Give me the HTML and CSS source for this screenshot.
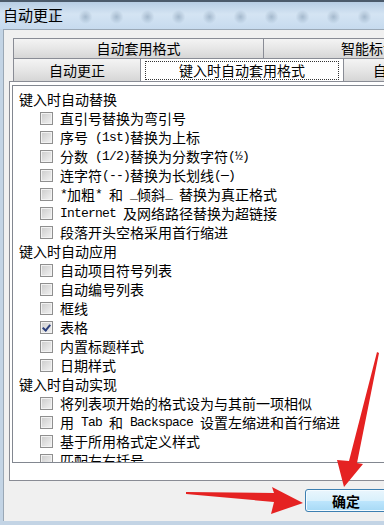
FILE: index.html
```html
<!DOCTYPE html>
<html lang="zh-CN">
<head>
<meta charset="UTF-8">
<meta name="viewport" content="width=device-width, initial-scale=1.0">
<title>自动更正</title>
<link rel="stylesheet" href="styles.css">
</head>
<body>
<div class="window">
    <div class="titlebar">自动更正</div>

    <div class="client">
        <div class="tabs">
            <div class="tab-row top">
                <div class="tab wide">自动套用格式</div>
                <div class="tab smart">智能标记</div>
            </div>
            <div class="tab-row bottom">
                <div class="tab first">自动更正</div>
                <div class="tab active"><span class="focus">键入时自动套用格式</span></div>
                <div class="tab last">自动套用格式</div>
            </div>
        </div>

        <div class="panel">
            <div class="list">
                <div class="group">键入时自动替换</div>
                <div class="item"><span class="check"></span>直引号替换为弯引号</div>
                <div class="item"><span class="check"></span>序号<span class="en"> (1st)</span>替换为上标</div>
                <div class="item"><span class="check"></span>分数<span class="en"> (1/2)</span>替换为分数字符<span class="en">(½)</span></div>
                <div class="item"><span class="check"></span>连字符<span class="en">(--)</span>替换为长划线<span class="en">(—)</span></div>
                <div class="item"><span class="check"></span><span class="en">*</span>加粗<span class="en">* </span>和<span class="en"> _</span>倾斜<span class="en">_ </span>替换为真正格式</div>
                <div class="item"><span class="check"></span><span class="en">Internet </span>及网络路径替换为超链接</div>
                <div class="item"><span class="check"></span>段落开头空格采用首行缩进</div>

                <div class="group">键入时自动应用</div>
                <div class="item"><span class="check"></span>自动项目符号列表</div>
                <div class="item"><span class="check"></span>自动编号列表</div>
                <div class="item"><span class="check"></span>框线</div>
                <div class="item"><span class="check checked"></span>表格</div>
                <div class="item"><span class="check"></span>内置标题样式</div>
                <div class="item"><span class="check"></span>日期样式</div>

                <div class="group">键入时自动实现</div>
                <div class="item"><span class="check"></span>将列表项开始的格式设为与其前一项相似</div>
                <div class="item"><span class="check"></span>用<span class="en"> Tab </span>和<span class="en"> Backspace </span>设置左缩进和首行缩进</div>
                <div class="item"><span class="check"></span>基于所用格式定义样式</div>
                <div class="item"><span class="check"></span>匹配左右括号</div>
            </div>
        </div>

        <div class="footer">
            <button class="button ok">确定</button>
        </div>
    </div>

    <!-- красные стрелки поверх окна -->
    <svg class="arrows" width="384" height="525" viewBox="0 0 384 525">
        <polygon points="186,492 274,493 272,487 303,503 271,514 274,502 186,494" fill="#e52222"/>
        <polygon points="377,352 379,353 357,463 363,464 344,487 337,460 349,461" fill="#e52222"/>
    </svg>
</div>
</body>
</html>
```

FILE: styles.css
```css
body {
    margin: 0;
    background: #f0f0f0;
    font-family: "Noto Sans CJK SC", "Liberation Sans", sans-serif;
    color: #000;
}

.window {
    position: relative;
    width: 384px;
    height: 525px;
    overflow: hidden;
    background: #c3d4e5;
}

.titlebar {
    height: 29px;
    box-sizing: border-box;
    border-top: 2px solid #4b5a6a;
    padding-left: 3px;
    font-size: 15px;
    line-height: 26px;
    background-image:
        radial-gradient(circle at 50% 55%, rgba(110, 135, 160, 0.45) 0, rgba(110, 135, 160, 0) 7px),
        linear-gradient(#b7cde3, #d4e4f3 45%, #c6daee);
    background-size: 31px 27px, 100% 100%;
    background-position: 8px 0, 0 0;
}

.client {
    height: 492px;
    margin-left: 3px;
    box-sizing: border-box;
    border-top: 1px solid #9aa8b6;
    border-left: 1px solid #9aa8b6;
    background: #f0f0f0;
    padding: 8px 0 0 5px;
}

.tabs {
    margin-left: 4px;
}

.tab-row {
    display: flex;
    white-space: nowrap;
}

.tab {
    flex: none;
    box-sizing: border-box;
    border: 1px solid #898c95;
    border-bottom: none;
    margin-right: -1px;
    background: linear-gradient(#f4f4f4, #e6e6e6 50%, #d6d6d6);
    font-size: 14px;
    text-align: center;
    overflow: hidden;
}

.tab-row.top .tab {
    height: 20px;
    line-height: 19px;
}

.tab.wide {
    width: 251px;
}

.tab.smart {
    width: 140px;
    text-align: left;
    padding-left: 77px;
}

.tab-row.bottom .tab {
    height: 23px;
    line-height: 22px;
}

.tab.first {
    width: 128px;
}

.tab.active {
    position: relative;
    width: 204px;
    height: 24px;
    margin-bottom: -1px;
    background: #fff;
    z-index: 1;
    padding: 2px 4px 0;
}

.tab.active .focus {
    display: block;
    height: 17px;
    line-height: 16px;
    border: 1px dotted #333;
}

.tab.last {
    width: 80px;
    text-align: left;
    padding-left: 29px;
}

.panel {
    width: 390px;
    height: 400px;
    box-sizing: border-box;
    border: 1px solid #898c95;
    background: #fff;
    padding: 3px 0 0 2px;
}

.list {
    height: 378px;
    box-sizing: border-box;
    border: 1px solid #828790;
    overflow: hidden;
    padding-top: 4px;
    font-size: 14px;
}

.group {
    height: 19px;
    line-height: 19px;
    padding-left: 6px;
    white-space: nowrap;
}

.item {
    display: flex;
    align-items: center;
    height: 19px;
    line-height: 19px;
    padding-left: 28px;
    white-space: nowrap;
}

.en {
    font-family: "Liberation Mono", monospace;
    font-size: 13px;
    letter-spacing: -0.8px;
    white-space: pre;
}

.check {
    flex: none;
    width: 13px;
    height: 13px;
    box-sizing: border-box;
    margin-left: -1px;
    margin-right: 7px;
    border: 1px solid #8f8f8f;
    background: linear-gradient(135deg, #cbcbcb, #f3f3f3);
    box-shadow: inset 0 0 0 1px #f2f2f2;
    position: relative;
}

.check.checked::after {
    content: "";
    position: absolute;
    left: 3px;
    top: 1px;
    width: 3px;
    height: 6px;
    border: solid #2b3f7c;
    border-width: 0 2px 2px 0;
    transform: rotate(40deg);
}

.footer {
    padding-top: 8px;
}

.button {
    font-family: "Noto Sans CJK SC", sans-serif;
    cursor: pointer;
}

.button.ok {
    display: block;
    margin-left: 296px;
    width: 82px;
    height: 23px;
    padding: 0;
    border: 1px solid #3c7fb1;
    border-radius: 3px;
    background: linear-gradient(#eaf6fd, #d9f0fc 50%, #bee6fd 51%, #a7d9f5);
    box-shadow: inset 0 0 0 1px #f4fbff;
    font-size: 14px;
    font-weight: bold;
    line-height: 20px;
    color: #000;
}

.arrows {
    position: absolute;
    left: 0;
    top: 0;
    pointer-events: none;
}
```
